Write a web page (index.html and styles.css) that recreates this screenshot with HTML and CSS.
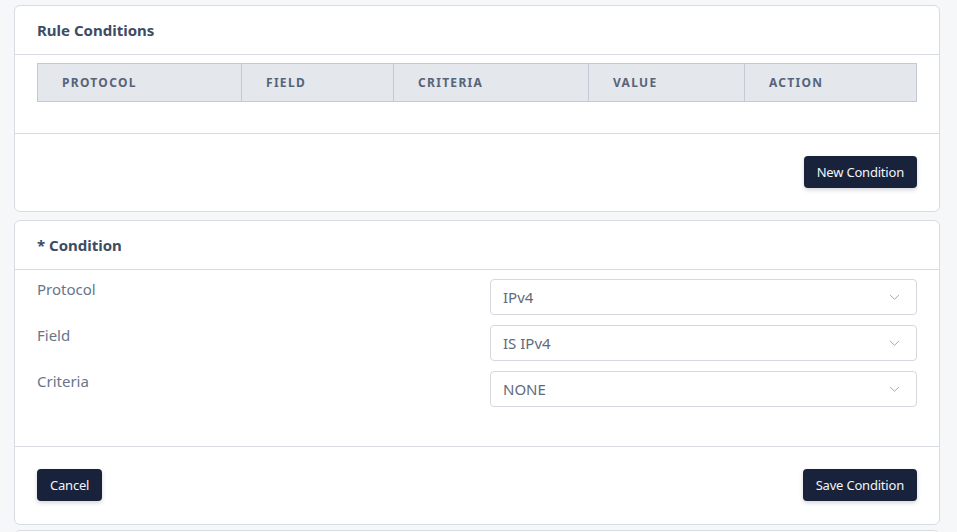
FILE: index.html
```html
<!DOCTYPE html>
<html>
<head>
<meta charset="utf-8">
<link rel="stylesheet" href="styles.css">
</head>
<body>
<div class="page">
  <section class="card">
    <div class="card-header">Rule Conditions</div>
    <div class="card-body table-body">
      <div class="table-head">
        <div class="th c1">PROTOCOL</div>
        <div class="th c2">FIELD</div>
        <div class="th c3">CRITERIA</div>
        <div class="th c4">VALUE</div>
        <div class="th c5">ACTION</div>
      </div>
    </div>
    <div class="card-footer end">
      <button class="btn">New Condition</button>
    </div>
  </section>

  <section class="card">
    <div class="card-header">* Condition</div>
    <div class="card-body form-body">
      <div class="form-grid">
        <label class="lbl">Protocol</label>
        <div class="select"><span>IPv4</span><svg class="chev" viewBox="0 0 12 8" width="11" height="7"><path d="M1 1.2 L6 6 L11 1.2" fill="none" stroke="#9aa3ad" stroke-width="1.1"/></svg></div>
        <label class="lbl">Field</label>
        <div class="select"><span>IS IPv4</span><svg class="chev" viewBox="0 0 12 8" width="11" height="7"><path d="M1 1.2 L6 6 L11 1.2" fill="none" stroke="#9aa3ad" stroke-width="1.1"/></svg></div>
        <label class="lbl">Criteria</label>
        <div class="select"><span>NONE</span><svg class="chev" viewBox="0 0 12 8" width="11" height="7"><path d="M1 1.2 L6 6 L11 1.2" fill="none" stroke="#9aa3ad" stroke-width="1.1"/></svg></div>
      </div>
    </div>
    <div class="card-footer between">
      <button class="btn">Cancel</button>
      <button class="btn">Save Condition</button>
    </div>
  </section>

  <section class="card stub"></section>
</div>
</body>
</html>
```

FILE: styles.css
```css
* { box-sizing: border-box; }
html, body { margin: 0; padding: 0; }
body {
  background: #f6f7f9;
  font-family: "Noto Sans", "Open Sans", sans-serif;
  color: #3f4d63;
  height: 532px;
  overflow: hidden;
}
.page {
  padding: 5px 17px 0 14px;
  display: flex;
  flex-direction: column;
  gap: 8px;
}
.card {
  background: #fff;
  border: 1px solid #d8dce2;
  border-radius: 6px;
}
.card-header {
  height: 49px;
  padding: 0 22px;
  display: flex;
  align-items: center;
  font-size: 15px;
  font-weight: 700;
  color: #3e4c63;
  border-bottom: 1px solid #d8dce2;
}
.card-body { padding: 0 22px; }
.table-body { padding-top: 8px; padding-bottom: 31px; border-bottom: 1px solid #d8dce2; }
.table-head {
  display: flex;
  height: 39px;
  background: #e4e7ec;
  border: 1px solid #c4cad3;
}
.th {
  display: flex;
  align-items: center;
  padding-left: 24px;
  font-size: 12px;
  font-weight: 700;
  letter-spacing: 1.3px;
  color: #566479;
  border-right: 1px solid #c4cad3;
}
.th:last-child { border-right: none; }
.c1 { width: 204px; }
.c2 { width: 152px; }
.c3 { width: 195px; }
.c4 { width: 156px; }
.c5 { flex: 1; }
.card-footer {
  display: flex;
  padding: 22px 22px 23px;
}
.end { justify-content: flex-end; }
.between { justify-content: space-between; }
.btn {
  height: 32px;
  padding: 0 13px;
  background: #19223b;
  color: #f2f4f8;
  border: none;
  border-radius: 4px;
  font-family: "Noto Sans", "Open Sans", sans-serif;
  font-size: 13px;
  letter-spacing: -0.2px;
  box-shadow: 0 2px 4px rgba(20, 30, 50, 0.18);
}
.form-body { padding-top: 9px; padding-bottom: 39px; border-bottom: 1px solid #d8dce2; }
.form-grid {
  display: grid;
  grid-template-columns: 427px 427px;
  column-gap: 26px;
  row-gap: 10px;
}
.lbl {
  font-size: 15px;
  color: #67758a;
  line-height: 20px;
}
.select {
  height: 36px;
  border: 1px solid #d5d9df;
  border-radius: 4px;
  display: flex;
  align-items: center;
  justify-content: space-between;
  padding: 0 16px 0 12px;
  font-size: 15px;
  color: #5f6b7b;
}
.stub { height: 20px; margin-top: -3px; border-radius: 6px 6px 0 0; }
```
